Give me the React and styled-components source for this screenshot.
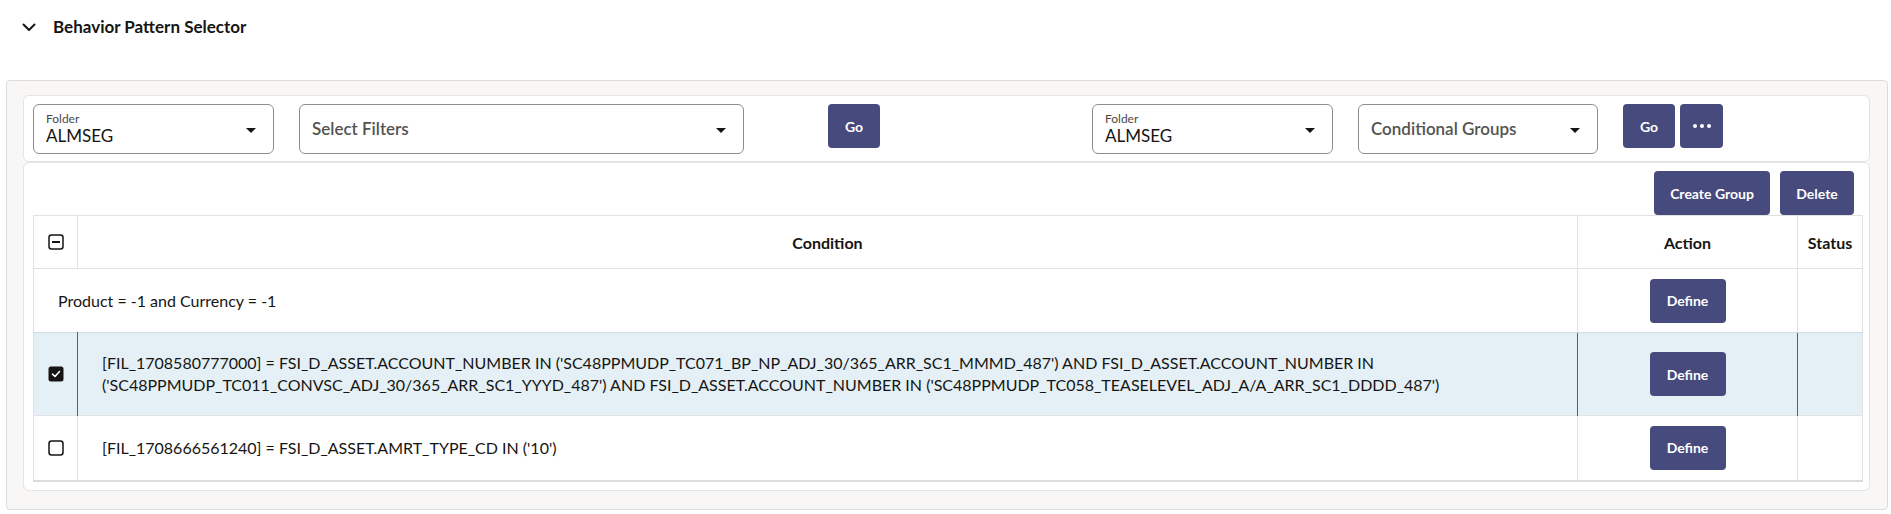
import React from "react";
import styled, { createGlobalStyle } from "styled-components";

const GlobalStyle = createGlobalStyle`
  html, body { margin: 0; padding: 0; background: #ffffff; }
  body { font-family: Lato, "Noto Sans", sans-serif; color: #161513; }
  * { box-sizing: border-box; }
`;

const Page = styled.div`
  width: 1891px;
`;

const Header = styled.div`
  display: flex;
  align-items: center;
  height: 54px;
  padding-left: 22px;
  gap: 17px;
`;

const Title = styled.h2`
  margin: 0;
  font-size: 17px;
  font-weight: 700;
  line-height: 20px;
  color: #161513;
`;

const Panel = styled.section`
  margin: 26px 3px 0 6px;
  border: 1px solid #dcdcdc;
  border-radius: 4px;
  background: #f8f7f5;
  padding: 14px 17px 18px 16px;
`;

const Card = styled.div`
  background: #ffffff;
  border: 1px solid #e4e4e4;
  border-radius: 6px;
`;

const Toolbar = styled(Card)`
  display: flex;
  align-items: flex-start;
  height: 67px;
  padding: 8px 9px 0 9px;
`;

const Group = styled.div`
  display: flex;
  align-items: flex-start;
  gap: ${(p) => p.$gap || 25}px;
  margin-left: ${(p) => p.$offset || 0}px;
`;

const SelectBox = styled.div`
  position: relative;
  width: ${(p) => p.$w}px;
  height: 50px;
  border: 1px solid #8f8e8c;
  border-radius: 6px;
  padding: 0 40px 0 12px;
  display: flex;
  flex-direction: column;
  justify-content: center;
`;

const SelectLabel = styled.div`
  font-size: 12px;
  line-height: 14px;
  color: #4a4a48;
`;

const SelectValue = styled.div`
  font-size: 17px;
  line-height: 20px;
  color: #161513;
`;

const Placeholder = styled.div`
  font-size: 17px;
  line-height: 20px;
  font-weight: 600;
  color: #545350;
`;

const Caret = styled.span`
  position: absolute;
  right: 17px;
  top: 23px;
  width: 0;
  height: 0;
  border-left: 5px solid transparent;
  border-right: 5px solid transparent;
  border-top: 5px solid #161513;
`;

const Button = styled.button`
  height: 44px;
  min-width: ${(p) => p.$w || 52}px;
  padding: 0 ${(p) => p.$px || 0}px;
  border: none;
  border-radius: 4px;
  background: #464a7d;
  color: #ffffff;
  font-family: Lato, "Noto Sans", sans-serif;
  font-size: 14px;
  font-weight: 700;
  display: inline-flex;
  align-items: center;
  justify-content: center;
  cursor: pointer;
  margin-left: ${(p) => p.$ml || 0}px;
`;

const GoGroup = styled.div`
  display: flex;
  gap: 5px;
`;

const TableCard = styled(Card)`
  padding: 8px 7px 8px 9px;
`;

const ActionsBar = styled.div`
  display: flex;
  justify-content: flex-end;
  gap: 10px;
  padding-right: 8px;
`;

const Table = styled.table`
  width: 1829px;
  table-layout: fixed;
  border-collapse: collapse;
  border: 1px solid #e2e2e2;
  border-bottom: 2px solid #dcdcdc;
`;

const Th = styled.th`
  height: 53px;
  font-size: 16px;
  font-weight: 700;
  text-align: center;
  border: 1px solid #e2e2e2;
  padding: 0;
  color: #161513;
`;

const Tr = styled.tr`
  background: ${(p) => (p.$selected ? "#e4f0f6" : "#ffffff")};
  border-top: 1px solid ${(p) => (p.$selected ? "#cfdde6" : "#e2e2e2")};
`;

const Td = styled.td`
  height: ${(p) => p.$h}px;
  padding: ${(p) => (p.$pad ? "0 24px" : "0")};
  text-align: ${(p) => p.$align || "left"};
  vertical-align: middle;
  font-size: 16px;
  line-height: 22px;
  color: #161513;
  border-left: 1px solid ${(p) => (p.$selected ? "#28708f" : "#e2e2e2")};
  border-right: 1px solid ${(p) => (p.$selected ? "#28708f" : "#e2e2e2")};
  &:first-child { border-left: 1px solid #e2e2e2; }
  &:last-child { border-right: 1px solid #e2e2e2; }
`;

const CheckCell = styled.div`
  display: flex;
  justify-content: center;
  align-items: center;
  padding-left: 1px;
`;

const Chevron = () => (
  <svg width="14" height="9" viewBox="0 0 14 9" fill="none">
    <path d="M1.5 1.5 L7 7 L12.5 1.5" stroke="#161513" strokeWidth="2" strokeLinecap="round" strokeLinejoin="round" />
  </svg>
);

const Box = ({ kind }) => (
  <svg width="16" height="16" viewBox="0 0 16 16">
    {kind === "checked" ? (
      <>
        <rect x="0.5" y="0.5" width="15" height="15" rx="2.5" fill="#161513" />
        <path d="M4.5 8.2 L7 10.5 L11.5 5.5" stroke="#ffffff" strokeWidth="1.6" fill="none" strokeLinecap="round" strokeLinejoin="round" />
      </>
    ) : (
      <>
        <rect x="1" y="1" width="14" height="14" rx="2.5" fill="#ffffff" stroke="#161513" strokeWidth="1.5" />
        {kind === "mixed" && <rect x="4" y="7" width="8" height="2" fill="#161513" />}
      </>
    )}
  </svg>
);

const Dots = () => (
  <svg width="20" height="6" viewBox="0 0 20 6">
    <circle cx="3" cy="3" r="2" fill="#fff" />
    <circle cx="10" cy="3" r="2" fill="#fff" />
    <circle cx="17" cy="3" r="2" fill="#fff" />
  </svg>
);

const Select = ({ w, label, value, placeholder }) => (
  <SelectBox $w={w}>
    {label && <SelectLabel>{label}</SelectLabel>}
    {label ? <SelectValue>{value}</SelectValue> : <Placeholder>{placeholder}</Placeholder>}
    <Caret />
  </SelectBox>
);

const rows = [
  {
    id: 1,
    text: "[FIL_1708580777000] = FSI_D_ASSET.ACCOUNT_NUMBER IN ('SC48PPMUDP_TC071_BP_NP_ADJ_30/365_ARR_SC1_MMMD_487') AND FSI_D_ASSET.ACCOUNT_NUMBER IN ('SC48PPMUDP_TC011_CONVSC_ADJ_30/365_ARR_SC1_YYYD_487') AND FSI_D_ASSET.ACCOUNT_NUMBER IN ('SC48PPMUDP_TC058_TEASELEVEL_ADJ_A/A_ARR_SC1_DDDD_487')",
    checked: true,
    h: 83,
  },
  {
    id: 2,
    text: "[FIL_1708666561240] = FSI_D_ASSET.AMRT_TYPE_CD IN ('10')",
    checked: false,
    h: 65,
  },
];

export default function App() {
  return (
    <Page>
      <GlobalStyle />
      <Header>
        <Chevron />
        <Title>Behavior Pattern Selector</Title>
      </Header>
      <Panel>
        <Toolbar>
          <Group>
            <Select w={241} label="Folder" value="ALMSEG" />
            <Select w={445} placeholder="Select Filters" />
            <Button $ml={59}>Go</Button>
          </Group>
          <Group $offset={212}>
            <Select w={241} label="Folder" value="ALMSEG" />
            <Select w={240} placeholder="Conditional Groups" />
            <GoGroup>
              <Button>Go</Button>
              <Button $w={43}>
                <Dots />
              </Button>
            </GoGroup>
          </Group>
        </Toolbar>
        <TableCard>
          <ActionsBar>
            <Button $w={116}>Create Group</Button>
            <Button $w={74}>Delete</Button>
          </ActionsBar>
          <Table>
            <colgroup>
              <col style={{ width: 44 }} />
              <col style={{ width: 1500 }} />
              <col style={{ width: 220 }} />
              <col style={{ width: 65 }} />
            </colgroup>
            <thead>
              <tr>
                <Th>
                  <CheckCell>
                    <Box kind="mixed" />
                  </CheckCell>
                </Th>
                <Th>Condition</Th>
                <Th>Action</Th>
                <Th>Status</Th>
              </tr>
            </thead>
            <tbody>
              <Tr>
                <Td colSpan={2} $h={64} $pad>
                  Product = -1 and Currency = -1
                </Td>
                <Td $align="center">
                  <Button $w={76}>Define</Button>
                </Td>
                <Td />
              </Tr>
              {rows.map((r) => (
                <Tr key={r.id} $selected={r.checked}>
                  <Td $h={r.h} $selected={r.checked}>
                    <CheckCell>
                      <Box kind={r.checked ? "checked" : "empty"} />
                    </CheckCell>
                  </Td>
                  <Td $pad $selected={r.checked}>{r.text}</Td>
                  <Td $align="center" $selected={r.checked}>
                    <Button $w={76}>Define</Button>
                  </Td>
                  <Td $selected={r.checked} />
                </Tr>
              ))}
            </tbody>
          </Table>
        </TableCard>
      </Panel>
    </Page>
  );
}
